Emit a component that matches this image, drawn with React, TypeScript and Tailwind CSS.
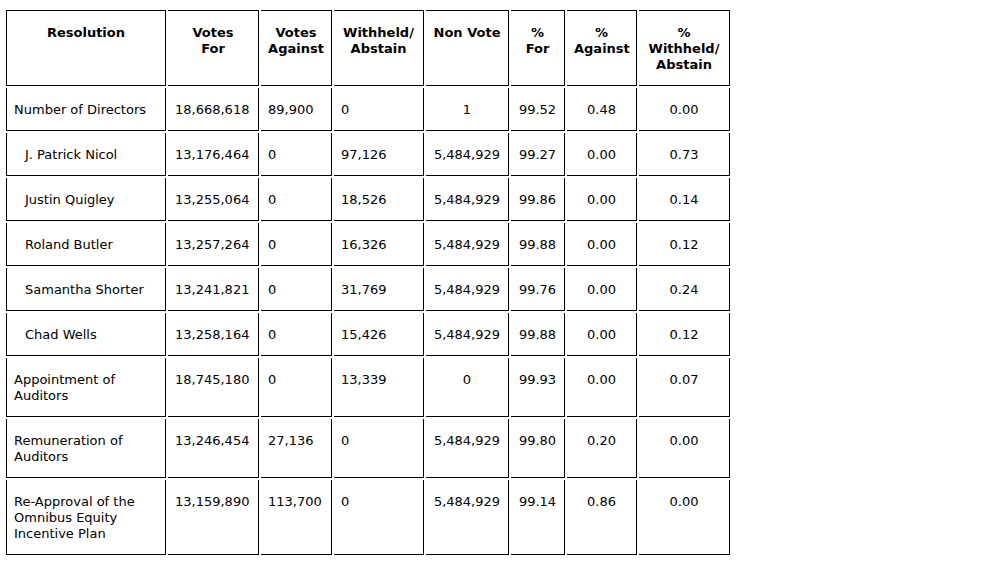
import React from "react";

type Align = "left" | "center";

const aligns: Align[] = ["left", "left", "left", "left", "center", "center", "center", "center"];

const headers: React.ReactNode[] = [
  <>Resolution</>,
  <>Votes<br />For</>,
  <>Votes<br />Against</>,
  <>Withheld/<br />Abstain</>,
  <>Non Vote</>,
  <>%<br />For</>,
  <>%<br />Against</>,
  <>%<br />Withheld/<br />Abstain</>,
];

type Row = { name: React.ReactNode; indent?: boolean; cells: string[] };

const rows: Row[] = [
  { name: "Number of Directors", cells: ["18,668,618", "89,900", "0", "1", "99.52", "0.48", "0.00"] },
  { name: "J. Patrick Nicol", indent: true, cells: ["13,176,464", "0", "97,126", "5,484,929", "99.27", "0.00", "0.73"] },
  { name: "Justin Quigley", indent: true, cells: ["13,255,064", "0", "18,526", "5,484,929", "99.86", "0.00", "0.14"] },
  { name: "Roland Butler", indent: true, cells: ["13,257,264", "0", "16,326", "5,484,929", "99.88", "0.00", "0.12"] },
  { name: "Samantha Shorter", indent: true, cells: ["13,241,821", "0", "31,769", "5,484,929", "99.76", "0.00", "0.24"] },
  { name: "Chad Wells", indent: true, cells: ["13,258,164", "0", "15,426", "5,484,929", "99.88", "0.00", "0.12"] },
  { name: <>Appointment of<br />Auditors</>, cells: ["18,745,180", "0", "13,339", "0", "99.93", "0.00", "0.07"] },
  { name: <>Remuneration of<br />Auditors</>, cells: ["13,246,454", "27,136", "0", "5,484,929", "99.80", "0.20", "0.00"] },
  { name: <>Re-Approval of the<br />Omnibus Equity<br />Incentive Plan</>, cells: ["13,159,890", "113,700", "0", "5,484,929", "99.14", "0.86", "0.00"] },
];

function Cell({
  children,
  first,
  header,
  align,
  indent,
}: {
  children: React.ReactNode;
  first?: boolean;
  header?: boolean;
  align: Align;
  indent?: boolean;
}) {
  return (
    <div
      className={[
        "border-black border-r border-b pt-[14px] pb-[12px] pr-[7px] whitespace-nowrap",
        first ? "border-l" : "",
        header ? "border-t font-bold text-center" : align === "center" ? "text-center" : "text-left",
        indent ? "pl-[18px]" : "pl-[7px]",
      ].join(" ")}
    >
      {children}
    </div>
  );
}

export default function App() {
  return (
    <div className="min-h-[561px] w-full bg-white pl-[6px] pt-[10px] text-black font-['DejaVu_Sans',Verdana,sans-serif] text-[13px] leading-[16px]">
      <div className="grid w-max grid-cols-[160px_91px_71px_90px_83px_54px_70px_91px] gap-[2px]">
        {headers.map((h, i) => (
          <Cell key={"h" + i} header first={i === 0} align="center">
            {h}
          </Cell>
        ))}
        {rows.map((r, ri) => (
          <React.Fragment key={ri}>
            <Cell first align="left" indent={r.indent}>
              {r.name}
            </Cell>
            {r.cells.map((c, ci) => (
              <Cell key={ci} align={aligns[ci + 1]}>
                {c}
              </Cell>
            ))}
          </React.Fragment>
        ))}
      </div>
    </div>
  );
}
